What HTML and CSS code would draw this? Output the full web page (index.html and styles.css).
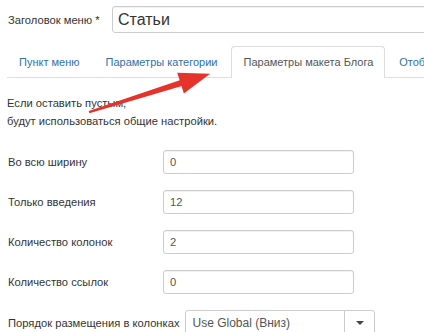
FILE: index.html
```html
<!DOCTYPE html>
<html lang="ru">
<head>
  <meta charset="UTF-8">
  <title>Параметры макета Блога</title>
  <link rel="stylesheet" href="styles.css">
</head>
<body>
  <div class="page">
    <div class="title-row">
      <label class="title-label">Заголовок меню *</label>
      <div class="title-input">Статьи</div>
    </div>

    <ul class="tabs">
      <li class="tab"><a href="#">Пункт меню</a></li>
      <li class="tab"><a href="#">Параметры категории</a></li>
      <li class="tab active"><a href="#">Параметры макета Блога</a></li>
      <li class="tab"><a href="#">Отобр</a></li>
    </ul>

    <p class="hint">Если оставить пустым,<br>будут использоваться общие настройки.</p>

    <div class="field">
      <label>Во всю ширину</label>
      <div class="input">0</div>
    </div>
    <div class="field">
      <label>Только введения</label>
      <div class="input">12</div>
    </div>
    <div class="field">
      <label>Количество колонок</label>
      <div class="input">2</div>
    </div>
    <div class="field">
      <label>Количество ссылок</label>
      <div class="input">0</div>
    </div>
    <div class="field">
      <label>Порядок размещения в колонках</label>
      <div class="select">
        <span class="select-value">Use Global (Вниз)</span>
        <span class="select-btn"><span class="caret"></span></span>
      </div>
    </div>

    <!-- red pointer drawn over the screenshot -->
    <svg class="arrow" width="424" height="332" viewBox="0 0 424 332">
      <g transform="translate(89 112) rotate(-17.5)" fill="#e5322b">
        <polygon points="0,-1 0,1.2 100,3.2 100,-3.2"/>
        <polygon points="96,-11 127,0 96,11"/>
      </g>
    </svg>
  </div>
</body>
</html>
```

FILE: styles.css
```css
body {
  margin: 0;
  background: #fff;
  font-family: "Liberation Sans", Arial, sans-serif;
  font-size: 11.2px;
  color: #333;
  overflow: hidden;
}
.page {
  position: relative;
  padding: 6px 0 0 8px;
  height: 326px;
  overflow: hidden;
}
.title-row {
  display: flex;
  align-items: center;
}
.title-label {
  width: 104px;
}
.title-input {
  flex: 1;
  height: 27px;
  box-sizing: border-box;
  margin-right: -10px;
  border: 1px solid #ccc;
  border-radius: 3px 0 0 3px;
  box-shadow: inset 0 1px 1px rgba(0,0,0,0.06);
  padding: 0 5px;
  font-size: 16px;
  line-height: 25px;
  color: #333;
}
.tabs {
  list-style: none;
  margin: 13px 0 0 -1px;
  padding: 0;
  display: flex;
  white-space: nowrap;
  border-bottom: 1px solid #ddd;
  font-size: 11px;
}
.tab {
  margin-right: 2px;
  margin-bottom: -1px;
}
.tab a {
  display: block;
  padding: 0 11px;
  line-height: 30px;
  color: #3071a9;
  text-decoration: none;
  border: 1px solid transparent;
  border-bottom: 0;
  border-radius: 4px 4px 0 0;
}
.tab.active a {
  color: #555;
  background: #fff;
  border-color: #ddd;
  line-height: 31px;
}
.hint {
  margin: 16px 0 20px -1px;
  line-height: 18px;
}
.field {
  display: flex;
  align-items: center;
  margin-bottom: 16px;
}
.field label {
  min-width: 149px;
  margin-right: 6px;
}
.input {
  width: 191px;
  height: 24px;
  box-sizing: border-box;
  border: 1px solid #ccc;
  border-radius: 3px;
  box-shadow: inset 0 1px 1px rgba(0,0,0,0.06);
  padding: 0 6px;
  line-height: 22px;
  color: #555;
}
.select {
  display: flex;
  width: 190px;
  height: 26px;
  box-sizing: border-box;
  border: 1px solid #ccc;
  border-radius: 3px;
  color: #555;
}
.select-value {
  flex: 1;
  padding: 0 6px;
  line-height: 24px;
  font-size: 12px;
}
.select-btn {
  width: 29px;
  border-left: 1px solid #ccc;
  display: flex;
  align-items: center;
  justify-content: center;
}
.caret {
  width: 0;
  height: 0;
  border-left: 4px solid transparent;
  border-right: 4px solid transparent;
  border-top: 4px solid #444;
}
.arrow {
  position: absolute;
  left: 0;
  top: 0;
  pointer-events: none;
}
```
